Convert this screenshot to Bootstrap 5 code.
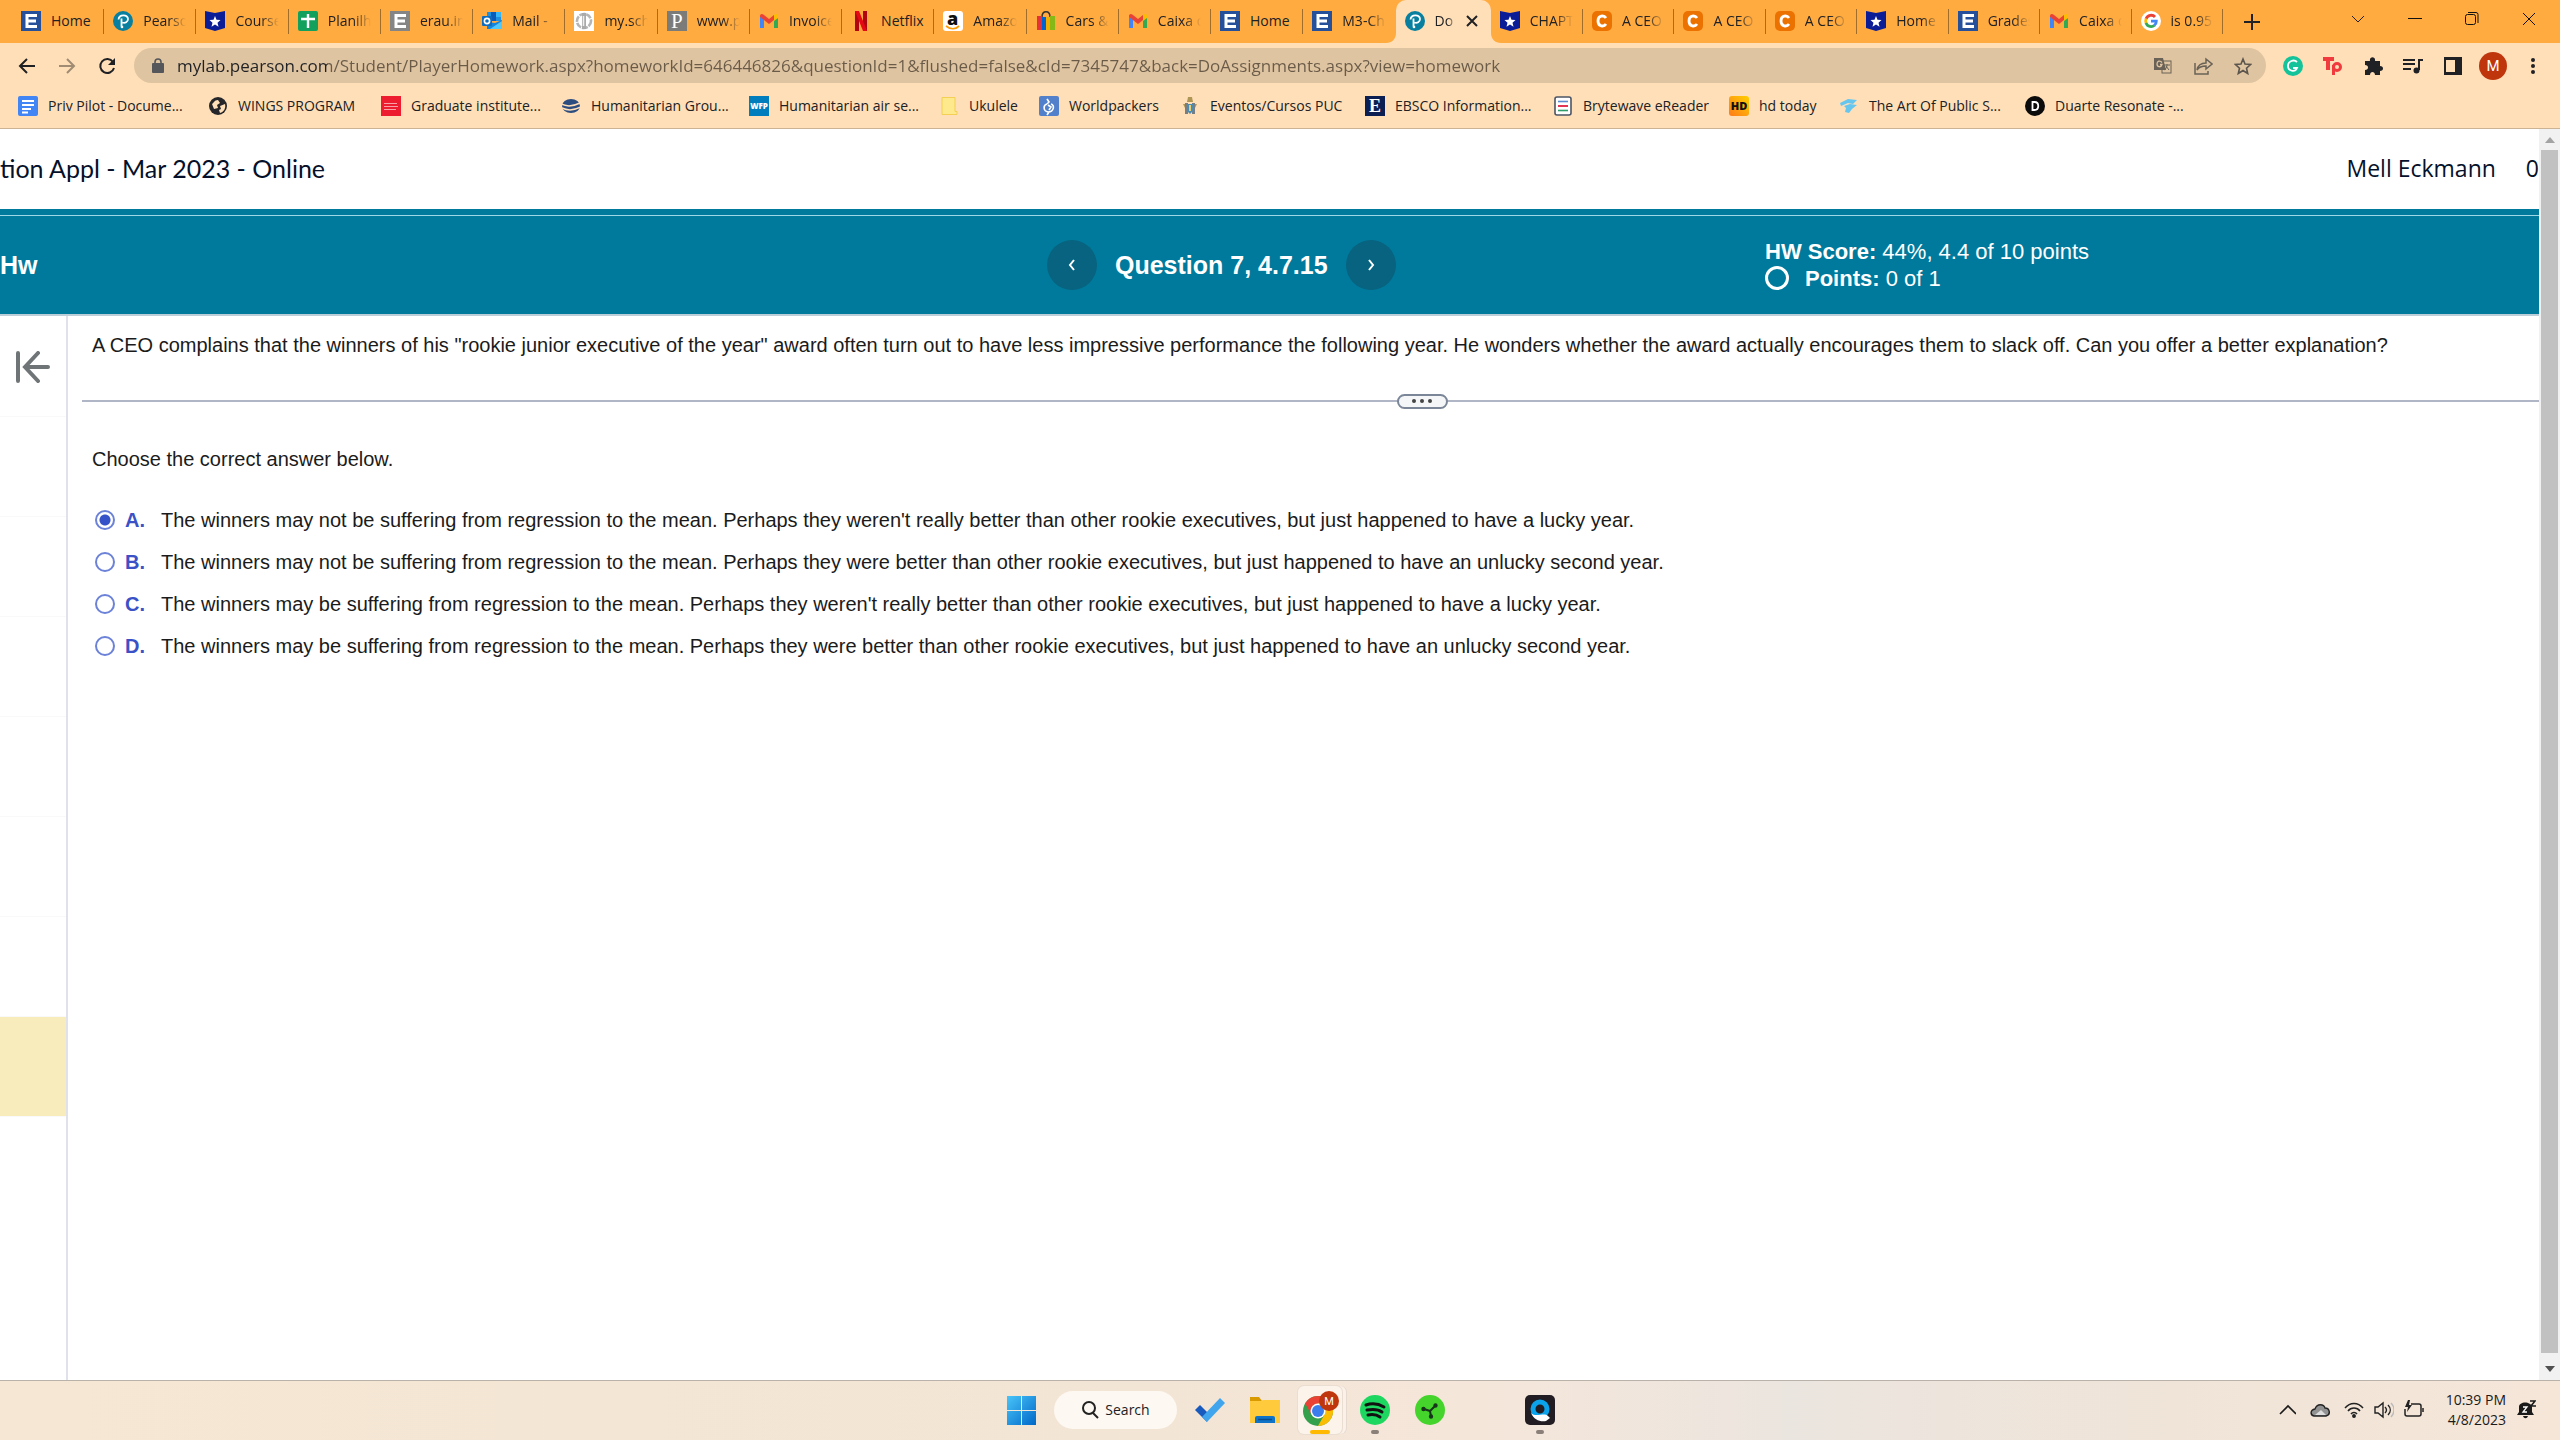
<!DOCTYPE html>
<html lang="en">
<head>
<meta charset="utf-8">
<meta name="viewport" content="width=device-width, initial-scale=1">
<title>Do Homework</title>
<link href="https://cdn.jsdelivr.net/npm/bootstrap@5.3.0/dist/css/bootstrap.min.css" rel="stylesheet">
<style>
  :root { --ui: "Open Sans", "Noto Sans", sans-serif; --doc: "Liberation Sans", Arial, sans-serif; --peach: #ffdfb8; --teal: #007a9c; }
  body { font-family: var(--ui); color: #202124; font-size: 14px; line-height: 20px; }
  svg { display: block; flex: none; }
  button { color: inherit; }
  .plain { border: 0; background: none; padding: 0; display: flex; align-items: center; justify-content: center; flex: none; }
  .ico { width: 20px; height: 20px; }

  .tabstrip { background: #ffab40; height: 43px; padding-left: 12px; }
  .tabs-a { flex: 0 0 1571px; min-width: 0; }
  .tabs-b { flex: 0 0 640px; min-width: 0; }
  .tab { flex: 1 1 0; min-width: 0; height: 43px; padding: 0 10px 1px 9px; gap: 10px; border: 0; background: none; text-align: left; position: relative; }
  .tab::after { content: ""; position: absolute; right: 0; top: 9px; height: 25px; width: 1px; background: #a06d2b; }
  .tab span { flex: 1; min-width: 0; overflow: hidden; white-space: nowrap; -webkit-mask-image: linear-gradient(90deg, #000 60%, transparent); mask-image: linear-gradient(90deg, #000 60%, transparent); }
  .tab.full span { -webkit-mask-image: none; mask-image: none; overflow: visible; }
  .tab.active { background: var(--peach); border-radius: 10px 10px 0 0; padding-right: 13px; }
  .tab.active::after, .tab.before::after { display: none; }
  .tab.active svg.foot { position: absolute; bottom: 0; }
  .tab.active .foot-l { left: -10px; }
  .tab.active .foot-r { right: -10px; }
  .winbtn { width: 57px; height: 37px; }
  .wincontrols { padding-right: 3px; }

  .toolbar { background: var(--peach); height: 45px; padding: 0 7px; }
  .tool { width: 40px; height: 40px; }
  .address { background: #dfc4a1; border-radius: 18px; height: 35px; margin: 0 7px; padding: 0 3px 0 18px; }
  .address input { flex: 1; min-width: 0; border: 0; outline: 0; padding: 0; margin-left: 13px; font-size: 17px; height: 30px; background: linear-gradient(90deg, #202124 0 151px, #6a5b49 151px); -webkit-background-clip: text; background-clip: text; -webkit-text-fill-color: transparent; }
  .bookmarks { background: var(--peach); height: 41px; padding: 0 18px 5px; border-bottom: 1px solid #ccb393; display: grid; align-items: center; grid-template-columns: 190px 173px 180px 188px 190px 100px 141px 185px 188px 176px 110px 186px 1fr; }
  .bookmarks a { color: #202124; text-decoration: none; display: flex; gap: 10px; align-items: center; white-space: nowrap; }

  .coursebar { height: 80px; padding-bottom: 2px; font-family: Lato, sans-serif; font-size: 25px; line-height: 28px; color: #05112a; white-space: nowrap; overflow: hidden; }
  .member { font-family: var(--ui); font-size: 23px; gap: 30px; }
  .band { background: var(--teal); color: #fff; font-family: var(--doc); border-top: 6px solid var(--teal); border-bottom: 2px solid #bccfd9; box-shadow: inset 0 1px #9ed8e6; height: 107px; display: grid; grid-template-columns: 1047px 718px 1fr; align-items: center; font-size: 22px; line-height: 27px; }
  .band h1, .band h2 { font-size: 25px; line-height: 30px; font-weight: 700; margin: 0; }
  .asknav { gap: 18px; }
  .round { width: 50px; height: 50px; border-radius: 50%; background: #07637f; }
  .ring { width: 24px; height: 24px; border: 3px solid #fff; border-radius: 50%; }

  .rail { flex: 0 0 68px; border-right: 2px solid #dfe2ea; padding-top: 1px; }
  .rail .cell { height: 100px; border-bottom: 1px solid #f9f9f9; flex: none; }
  .rail .now { background: #f8ebbc; }
  .quiz { font-family: var(--doc); font-size: 20px; line-height: 24px; color: #1b1b1b; padding-left: 14px; }
  .inset10 { padding-left: 10px; }
  .stem { margin: 0; padding-top: 17px; }
  .split { height: 2px; background: #b1b6c6; margin-top: 43px; padding-left: 223px; }
  .pill { width: 51px; height: 15px; border: 2px solid #7b8798; border-radius: 8px; background: #f4f6f8; gap: 4px; }
  .pill i { width: 4px; height: 4px; border-radius: 50%; background: #444; }
  .ask { margin: 0; padding: 45px 0 28px; font-size: 20px; line-height: 24px; }
  .answer { height: 42px; display: flex; align-items: center; }
  .answer input { appearance: none; width: 20px; height: 20px; border: 2px solid #6b82d8; border-radius: 50%; margin: 0 10px 0 3px; background: #fff; flex: none; }
  .answer input:checked { background: radial-gradient(circle, #3552c8 0 5px, #fff 6px); }
  .answer b { color: #3a52c6; width: 36px; }
  .vbar { flex: 0 0 21px; background: #f1f1f1; }
  .vbar .thumb { background: #c1c1c1; width: 17px; flex: 1; }

  .taskbar { height: 60px; padding-bottom: 1px; border-top: 1px solid #b9b2ab; background: linear-gradient(90deg, #f5e7d3, #f3e5d5 45%, #f5e6da 58%, #ebe5df 70%, #f0e4d8 85%, #f5e6d8); display: grid; grid-template-columns: 999px 1fr auto; align-items: center; }
  .apps { gap: 11px; }
  .task { width: 44px; height: 48px; position: relative; }
  .task.run::after { content: ""; position: absolute; bottom: 0; width: 8px; height: 4px; border-radius: 2px; background: #8a8079; }
  .task.on { background: #fcf3ea; border-radius: 6px; box-shadow: 0 0 0 1px #eaded2, 4px 0 0 #fbf1e8, 5px 0 0 #e6d9cd; }
  .task.on::after { width: 20px; background: #ffb900; }
  .task.launch { margin-left: 55px; }
  .find { width: 123px; height: 38px; border-radius: 19px; background: #fdf8f2; gap: 6px; }
  .tray { gap: 10px; padding-right: 24px; color: #1a1a1a; }
  .clock { text-align: right; line-height: 20px; margin-left: 12px; }
</style>
</head>
<body class="vh-100 d-flex flex-column overflow-hidden bg-white">
<svg width="0" height="0" class="position-absolute" aria-hidden="true">
  <defs>
    <symbol id="er" viewBox="0 0 20 20"><path fill="#27509b" d="M0 0h20v20H0z"/><path fill="none" stroke="#fff" stroke-width="3" d="M16 4.500H6v11h10M6 10h9"/></symbol>
    <symbol id="erg" viewBox="0 0 20 20"><path fill="#858585" d="M0 0h20v20H0z"/><path fill="none" stroke="#fff" stroke-width="3" d="M16 4.500H6v11h10M6 10h9"/></symbol>
    <symbol id="pe" viewBox="0 0 20 20"><circle cx="10" cy="10" r="10" fill="#087f9f"/><path fill="none" stroke="#fff" stroke-width="1.800" d="M8.500 15.500V7.500M5.500 8.500C6 3 15 3 15 8c0 3-3 4.500-5.500 3.500"/><circle cx="9" cy="16" r="1.300" fill="#fff"/></symbol>
    <symbol id="st" viewBox="0 0 20 20"><path fill="#0a1d96" d="M0 0l10 2L20 0v17l-10 3L0 17z"/><path fill="#fff" d="M10 5l1.500 3.800 4 .3-3 2.600 1 4-3.500-2.200-3.500 2.200 1-4-3-2.600 4-.3z"/></symbol>
    <symbol id="pl" viewBox="0 0 20 20"><rect width="20" height="20" rx="2" fill="#12a05c"/><path stroke="#fff" stroke-width="2.400" d="M10 3v14M3 8h14"/></symbol>
    <symbol id="ol" viewBox="0 0 20 20"><path fill="#1f8fe0" d="M5 1h14v9H5z"/><path fill="#0a5cb8" d="M9 1h5v9H9z"/><path fill="#35b8f5" d="M14 1h5v5h-5z"/><path fill="#1284dc" d="M5 11l8 1 7-3v9H5z"/><path fill="#50c8fa" d="M8 18l12-8v8z"/><rect y="5" width="10" height="10" rx="1" fill="#0f6cbd"/><circle cx="5" cy="10" r="2.600" fill="none" stroke="#fff" stroke-width="1.600"/></symbol>
    <symbol id="sc" viewBox="0 0 20 20"><path fill="#fff" d="M0 0h20v20H0z"/><circle cx="10" cy="10" r="7" fill="none" stroke="#b5b5b5" stroke-width="2.600" stroke-dasharray="6 1"/><path fill="#aaa" d="M8 2h4v16H8z"/><path stroke="#eee" stroke-width="1.500" d="M9.500 5v10"/></symbol>
    <symbol id="pp" viewBox="0 0 20 20"><path fill="#7b7b79" d="M0 0h20v20H0z"/><text x="4" y="17" font-family="Liberation Serif" font-size="21" fill="#fff">P</text></symbol>
    <symbol id="gm" viewBox="0 0 20 20"><path fill="#4285f4" d="M1 5l4 3v9H1z"/><path fill="#34a853" d="M15 8l4-3v12h-4z"/><path fill="#ea4335" d="M1 5c0-2 2-3 4-1l5 4 5-4v5l-5 4-9-7z"/><path fill="#fbbc04" d="M15 4c2-2 4-1 4 1v2l-4 3z"/></symbol>
    <symbol id="nf" viewBox="0 0 20 20"><path fill="#b1060f" d="M4 0h4v20H4zM12 0h4v20h-4z"/><path fill="#e50914" d="M4 0h4l8 20h-4z"/></symbol>
    <symbol id="am" viewBox="0 0 20 20"><rect width="20" height="20" rx="3" fill="#fff"/><text x="4" y="14" font-family="Open Sans" font-weight="800" font-size="18" fill="#111">a</text><path fill="none" stroke="#ff9900" stroke-width="1.800" d="M3 15c5 4 10 3 13 0"/></symbol>
    <symbol id="ca" viewBox="0 0 20 20"><path fill="none" stroke="#333" stroke-width="1.400" d="M6 6c0-7 8-7 8 0"/><path fill="#e53238" d="M1 5h5v14H1z"/><path fill="#0064d2" d="M6 6h4v13H6z"/><path fill="#f5af02" d="M10 6h4v13h-4z"/><path fill="#86b817" d="M14 5h5v14h-5z"/></symbol>
    <symbol id="cc" viewBox="0 0 20 20"><rect width="20" height="20" rx="5" fill="#eb7100"/><path fill="none" stroke="#fff" stroke-width="2.800" d="M14 7c-2-3-8-3-8 3s6 6 8 3"/></symbol>
    <symbol id="gg" viewBox="0 0 20 20"><circle cx="10" cy="10" r="10" fill="#fff"/><g fill="none" stroke-width="2.800"><path stroke="#ea4335" d="M5 8c1.500-4 6.500-5 9-2"/><path stroke="#fbbc04" d="M5.200 12.500c-.8-1.600-.8-3.300 0-5"/><path stroke="#34a853" d="M5 12c1.500 4 6 4.500 8.500 2.200"/><path stroke="#4285f4" d="M10 10.200h5.300c0 2-.7 3.300-2 4.200"/></g></symbol>
    <symbol id="dc" viewBox="0 0 20 20"><rect width="20" height="20" rx="2" fill="#4285f4"/><path stroke="#fff" stroke-width="2" d="M4 5h12M4 9h12M4 13h9M4 16.500h6"/></symbol>
    <symbol id="gl" viewBox="0 0 20 20"><circle cx="10" cy="10" r="9" fill="#25262a"/><path fill="#ffdfb8" d="M4 8c2-1 2-4 6-4l2 3-3 2 1 3-4 1zM12 10l5-2c1 4-1 8-5 9l-1-3 2-1z"/></symbol>
    <symbol id="gr" viewBox="0 0 20 20"><path fill="#ed1c2e" d="M0 0h20v20H0z"/><path stroke="#f8a0a5" d="M3 7.500h13M3 10.500h14M3 13.500h12"/></symbol>
    <symbol id="hu" viewBox="0 0 20 20"><ellipse cx="10" cy="10" rx="9" ry="7" fill="#2c4d80"/><path fill="none" stroke="#ffdfb8" stroke-width="1.500" d="M0 8c6 3 13 2 19-1M1 12c6 3 13 2 19-1"/></symbol>
    <symbol id="wf" viewBox="0 0 20 20"><path fill="#007dbc" d="M0 0h20v20H0z"/><text x="10" y="13" text-anchor="middle" font-family="Open Sans" font-weight="800" font-size="8" fill="#fff">WFP</text></symbol>
    <symbol id="uk" viewBox="0 0 20 20"><path fill="#ffe98d" stroke="#f3cf55" d="M3 1.500h13v14h2v3H3z"/></symbol>
    <symbol id="wo" viewBox="0 0 20 20"><rect width="20" height="20" rx="2" fill="#5380cb"/><path fill="none" stroke="#fff" stroke-width="1.600" d="M8 3l2 3-2 2M8 8c-4 1-4 7 1 8 6 0 7-7 3-8M10 16l-2 3M9 9l3 2-2 3"/></symbol>
    <symbol id="ev" viewBox="0 0 20 20"><path fill="#b09654" d="M8 1h4l1 5H7zM3 8h14l-2 4H5z"/><path fill="#777d83" d="M5 7h3v11H5zM12 7h3v11h-3z"/><path fill="#4b8cb3" d="M7 8h6v7l-3 3-3-3z"/><path fill="#e8cc76" d="M9 9h2v6H9z"/></symbol>
    <symbol id="eb" viewBox="0 0 20 20"><path fill="#0c1f52" d="M0 0h20v20H0z"/><text x="4" y="16" font-family="Liberation Serif" font-weight="700" font-size="18" fill="#fff">E</text></symbol>
    <symbol id="br" viewBox="0 0 20 20"><rect x="2" y="1" width="16" height="18" rx="2" fill="#fff" stroke="#4c5566" stroke-width="1.600"/><path stroke="#5a8ed0" stroke-width="1.600" d="M5 5.500h10"/><path stroke="#e23654" stroke-width="2" d="M5 10h10"/><path stroke="#2f9c6b" stroke-width="1.600" d="M5 14.500h10"/></symbol>
    <symbol id="hd" viewBox="0 0 20 20"><linearGradient id="hdg" x1="0" y1="1" x2="1" y2="0"><stop stop-color="#ff7a1a"/><stop offset="1" stop-color="#ffd000"/></linearGradient><rect width="20" height="20" rx="3" fill="url(#hdg)"/><text x="10" y="14" text-anchor="middle" font-family="Open Sans" font-weight="800" font-size="11" fill="#111">HD</text></symbol>
    <symbol id="ar" viewBox="0 0 20 20"><path fill="#67c6ee" d="M1 7l8-4 9 1-4 4-5-1-7 3zM5 10l6-2 7 1-5 4-3 4-4-1 1-4z"/></symbol>
    <symbol id="du" viewBox="0 0 20 20"><circle cx="10" cy="10" r="10" fill="#0b0b0b"/><path fill="none" stroke="#fff" stroke-width="1.800" d="M7.500 6v8h2c5 0 5-8 0-8z"/></symbol>
  </defs>
</svg>

<header>
  <nav class="tabstrip d-flex" aria-label="Tabs">
    <div class="tabs-a d-flex">
      <button class="tab full d-flex align-items-center"><svg class="ico"><use href="#er"/></svg><span>Home</span></button>
      <button class="tab d-flex align-items-center"><svg class="ico"><use href="#pe"/></svg><span>Pearso</span></button>
      <button class="tab d-flex align-items-center"><svg class="ico"><use href="#st"/></svg><span>Course</span></button>
      <button class="tab d-flex align-items-center"><svg class="ico"><use href="#pl"/></svg><span>Planilh</span></button>
      <button class="tab d-flex align-items-center"><svg class="ico"><use href="#erg"/></svg><span>erau.in</span></button>
      <button class="tab d-flex align-items-center"><svg class="ico"><use href="#ol"/></svg><span>Mail -</span></button>
      <button class="tab d-flex align-items-center"><svg class="ico"><use href="#sc"/></svg><span>my.sch</span></button>
      <button class="tab d-flex align-items-center"><svg class="ico"><use href="#pp"/></svg><span>www.p</span></button>
      <button class="tab d-flex align-items-center"><svg class="ico"><use href="#gm"/></svg><span>Invoice</span></button>
      <button class="tab full d-flex align-items-center"><svg class="ico"><use href="#nf"/></svg><span>Netflix</span></button>
      <button class="tab d-flex align-items-center"><svg class="ico"><use href="#am"/></svg><span>Amazo</span></button>
      <button class="tab d-flex align-items-center"><svg class="ico"><use href="#ca"/></svg><span>Cars &amp;</span></button>
      <button class="tab d-flex align-items-center"><svg class="ico"><use href="#gm"/></svg><span>Caixa d</span></button>
      <button class="tab full d-flex align-items-center"><svg class="ico"><use href="#er"/></svg><span>Home</span></button>
      <button class="tab before d-flex align-items-center"><svg class="ico"><use href="#er"/></svg><span>M3-Ch</span></button>
      <button class="tab active d-flex align-items-center"><svg class="foot foot-l" width="10" height="10"><path fill="#ffdfb8" d="M10 0v10H0c6 0 10-4 10-10z"/></svg><svg class="ico"><use href="#pe"/></svg><span>Do</span><svg width="12" height="12" viewBox="0 0 12 12"><path stroke="#202124" stroke-width="2" d="M1 1l10 10M11 1L1 11"/></svg><svg class="foot foot-r" width="10" height="10"><path fill="#ffdfb8" d="M0 0v10h10C4 10 0 6 0 0z"/></svg></button>
      <button class="tab d-flex align-items-center"><svg class="ico"><use href="#st"/></svg><span>CHAPT</span></button>
    </div>
    <div class="tabs-b d-flex">
      <button class="tab d-flex align-items-center"><svg class="ico"><use href="#cc"/></svg><span>A CEO</span></button>
      <button class="tab d-flex align-items-center"><svg class="ico"><use href="#cc"/></svg><span>A CEO</span></button>
      <button class="tab d-flex align-items-center"><svg class="ico"><use href="#cc"/></svg><span>A CEO</span></button>
      <button class="tab d-flex align-items-center"><svg class="ico"><use href="#st"/></svg><span>Home</span></button>
      <button class="tab d-flex align-items-center"><svg class="ico"><use href="#er"/></svg><span>Grades</span></button>
      <button class="tab d-flex align-items-center"><svg class="ico"><use href="#gm"/></svg><span>Caixa d</span></button>
      <button class="tab d-flex align-items-center"><svg class="ico"><use href="#gg"/></svg><span>is 0.95</span></button>
    </div>
    <button class="plain winbtn h-100" aria-label="New tab"><svg width="16" height="16"><path stroke="#202124" stroke-width="2" d="M8 0v16M0 8h16"/></svg></button>
    <div class="wincontrols ms-auto d-flex">
      <button class="plain winbtn" aria-label="Search tabs"><svg width="14" height="8" fill="none" stroke="#222"><path d="M1 1l6 6 6-6"/></svg></button>
      <button class="plain winbtn" aria-label="Minimize"><svg width="14" height="2"><path fill="#111" d="M0 0h14v1H0z"/></svg></button>
      <button class="plain winbtn" aria-label="Restore"><svg width="14" height="14" fill="none" stroke="#111"><rect x=".500" y="2.500" width="10" height="10" rx="2"/><path d="M3 .500h8a2 2 0 0 1 2 2V11"/></svg></button>
      <button class="plain winbtn" aria-label="Close"><svg width="14" height="14" stroke="#111"><path d="M1 1l12 12M13 1L1 13"/></svg></button>
    </div>
  </nav>

  <div class="toolbar d-flex align-items-center">
    <button class="plain tool" aria-label="Back"><svg width="18" height="16" fill="none" stroke="#202124" stroke-width="2"><path d="M17 8H2M9 1L2 8l7 7"/></svg></button>
    <button class="plain tool" aria-label="Forward"><svg width="18" height="16" fill="none" stroke="#a08c73" stroke-width="2"><path d="M1 8h15M9 1l7 7-7 7"/></svg></button>
    <button class="plain tool" aria-label="Reload"><svg width="18" height="18" fill="none" stroke="#202124" stroke-width="2"><path d="M15 5a7 7 0 1 0 1 6"/><path fill="#202124" stroke="none" d="M17 1v7h-7z"/></svg></button>
    <div class="address d-flex align-items-center flex-grow-1">
      <svg width="12" height="16"><rect y="5" width="12" height="10" rx="1" fill="#55565a"/><path fill="none" stroke="#55565a" stroke-width="1.600" d="M3 6V4c0-4 6-4 6 0v2"/></svg>
      <input type="text" aria-label="Address" value="mylab.pearson.com/Student/PlayerHomework.aspx?homeworkId=646446826&amp;questionId=1&amp;flushed=false&amp;cId=7345747&amp;back=DoAssignments.aspx?view=homework">
      <button class="plain tool" aria-label="Translate"><svg width="18" height="18"><rect x="8" y="4" width="9" height="12" fill="none" stroke="#6a6256"/><path fill="#6a6256" d="M0 1h9l3 12H0z"/><path fill="none" stroke="#dfc4a1" stroke-width="1.300" d="M8 5.500C6 3 3 4 3 7s4 4 5 .500H6"/><path stroke="#6a6256" fill="none" d="M10 8h6M13 7v1c0 2-1 4-3 5M12 9l3 4"/></svg></button>
      <button class="plain tool" aria-label="Share"><svg width="20" height="18" fill="none" stroke="#6a6256" stroke-width="1.500"><path d="M2 6v11h13v-3M4 13c1-5 4-7 9-7V2l6 5-6 5V9c-4 0-7 1-9 4z"/></svg></button>
      <button class="plain tool" aria-label="Bookmark"><svg width="18" height="18" fill="none" stroke="#5b554d" stroke-width="1.600"><path d="M9 2l2 5 5.500.500-4 3.700 1.200 5.300L9 13.500l-4.700 3 1.200-5.300-4-3.700L7 7z"/></svg></button>
    </div>
    <button class="plain tool" aria-label="Grammar"><svg class="ico" viewBox="0 0 20 20"><circle cx="10" cy="10" r="10" fill="#15c39a"/><path fill="none" stroke="#fff" stroke-width="1.800" d="M14 6c-3-3-9-1-9 4s7 7 9 2h-4"/></svg></button>
    <button class="plain tool" aria-label="Teleparty"><svg width="20" height="20" fill="none" stroke="#f03a3e" stroke-width="4"><path d="M0 3h11M5 3v11"/><circle cx="14" cy="11" r="3.500" stroke-width="3"/><path stroke-width="3" d="M10.500 9v10"/></svg></button>
    <button class="plain tool" aria-label="Extensions"><svg width="20" height="20" fill="#202124"><path d="M2 5h5c-1-5 6-5 5 0h5v5c4 0 4 5 0 5v4h-5c0-4-5-4-5 0H2v-5c4 0 4-5 0-5z"/></svg></button>
    <button class="plain tool" aria-label="Media"><svg width="20" height="18" fill="none" stroke="#202124" stroke-width="2"><path d="M0 3h12M0 7h12M0 12h8M16 13V3h4"/><circle cx="13.500" cy="13.500" r="2" fill="#202124"/></svg></button>
    <button class="plain tool" aria-label="Side panel"><svg width="18" height="18"><path fill="#202124" d="M0 0h18v18H0z"/><path fill="#ffdfb8" d="M2 3h9v12H2z"/></svg></button>
    <button class="plain tool" aria-label="Profile"><svg width="28" height="28"><circle cx="14" cy="14" r="14" fill="#bf360c"/><text x="14" y="19" text-anchor="middle" font-size="15" fill="#fff" font-family="Roboto">M</text></svg></button>
    <button class="plain tool" aria-label="Menu"><svg width="4" height="16" fill="#202124"><circle cx="2" cy="2" r="2"/><circle cx="2" cy="8" r="2"/><circle cx="2" cy="14" r="2"/></svg></button>
  </div>

  <nav class="bookmarks" aria-label="Bookmarks">
    <a href="#"><svg class="ico"><use href="#dc"/></svg>Priv Pilot - Docume...</a>
    <a href="#"><svg class="ico"><use href="#gl"/></svg>WINGS PROGRAM</a>
    <a href="#"><svg class="ico"><use href="#gr"/></svg>Graduate institute...</a>
    <a href="#"><svg class="ico"><use href="#hu"/></svg>Humanitarian Grou...</a>
    <a href="#"><svg class="ico"><use href="#wf"/></svg>Humanitarian air se...</a>
    <a href="#"><svg class="ico"><use href="#uk"/></svg>Ukulele</a>
    <a href="#"><svg class="ico"><use href="#wo"/></svg>Worldpackers</a>
    <a href="#"><svg class="ico"><use href="#ev"/></svg>Eventos/Cursos PUC</a>
    <a href="#"><svg class="ico"><use href="#eb"/></svg>EBSCO Information...</a>
    <a href="#"><svg class="ico"><use href="#br"/></svg>Brytewave eReader</a>
    <a href="#"><svg class="ico"><use href="#hd"/></svg>hd today</a>
    <a href="#"><svg class="ico"><use href="#ar"/></svg>The Art Of Public S...</a>
    <a href="#"><svg class="ico"><use href="#du"/></svg>Duarte Resonate -...</a>
  </nav>
</header>

<div class="d-flex flex-grow-1 overflow-hidden">
  <div class="d-flex flex-column flex-grow-1">
    <div class="coursebar d-flex justify-content-between align-items-center">
      <div>tion Appl - Mar 2023 - Online</div>
      <div class="member d-flex"><span>Mell Eckmann</span><span>0</span></div>
    </div>
    <div class="band">
      <h2>Hw</h2>
      <div class="asknav d-flex align-items-center">
        <button class="plain round" aria-label="Previous question"><svg width="8" height="12" fill="none" stroke="#fff" stroke-width="2"><path d="M6 1L2 6l4 5"/></svg></button>
        <h1>Question 7, 4.7.15</h1>
        <button class="plain round" aria-label="Next question"><svg width="8" height="12" fill="none" stroke="#fff" stroke-width="2"><path d="M2 1l4 5-4 5"/></svg></button>
      </div>
      <div>
        <div><b>HW Score:</b> 44%, 4.4 of 10 points</div>
        <div class="d-flex align-items-center gap-3"><span class="ring"></span><span><b>Points:</b> 0 of 1</span></div>
      </div>
    </div>
    <div class="d-flex flex-grow-1">
      <aside class="rail d-flex flex-column">
        <div class="cell d-flex align-items-center ps-3"><button class="plain" aria-label="Collapse list"><svg width="36" height="32" viewBox="2 0 36 32" fill="none" stroke="#6f7577" stroke-width="4" stroke-linecap="round"><path d="M4 2v28M34 16H12M24 2L11 16l13 14"/></svg></button></div>
        <div class="cell"></div><div class="cell"></div><div class="cell"></div><div class="cell"></div><div class="cell"></div><div class="cell"></div>
        <div class="cell now"></div>
      </aside>
      <main class="quiz flex-grow-1">
        <p class="stem inset10">A CEO complains that the winners of his "rookie junior executive of the year" award often turn out to have less impressive performance the following year. He wonders whether the award actually encourages them to slack off. Can you offer a better explanation?</p>
        <div class="split d-flex align-items-center justify-content-center"><button class="plain pill" aria-label="Resize panes"><i></i><i></i><i></i></button></div>
        <fieldset class="inset10">
          <legend class="ask">Choose the correct answer below.</legend>
          <label class="answer"><input type="radio" name="q" checked><b>A.</b><span>The winners may not be suffering from regression to the mean. Perhaps they weren't really better than other rookie executives, but just happened to have a lucky year.</span></label>
          <label class="answer"><input type="radio" name="q"><b>B.</b><span>The winners may not be suffering from regression to the mean. Perhaps they were better than other rookie executives, but just happened to have an unlucky second year.</span></label>
          <label class="answer"><input type="radio" name="q"><b>C.</b><span>The winners may be suffering from regression to the mean. Perhaps they weren't really better than other rookie executives, but just happened to have a lucky year.</span></label>
          <label class="answer"><input type="radio" name="q"><b>D.</b><span>The winners may be suffering from regression to the mean. Perhaps they were better than other rookie executives, but just happened to have an unlucky second year.</span></label>
        </fieldset>
      </main>
    </div>
  </div>
  <div class="vbar d-flex flex-column align-items-center">
    <svg width="21" height="21"><path fill="#a3a3a3" d="M6 14l5-6 5 6z"/></svg>
    <div class="thumb"></div>
    <svg width="21" height="27"><path fill="#505050" d="M6 13l5 6 5-6z"/></svg>
  </div>
</div>

<footer class="taskbar">
  <span></span>
  <div class="apps d-flex align-items-center">
    <button class="plain task" aria-label="Start"><svg width="30" height="30"><defs><linearGradient id="wg" gradientUnits="userSpaceOnUse" x1="0" y1="0" x2="30" y2="30"><stop stop-color="#4cc8fb"/><stop offset="1" stop-color="#0067c8"/></linearGradient></defs><path fill="url(#wg)" d="M1 1h14v14H1zM16 1h14v14H16zM1 16h14v14H1zM16 16h14v14H16z"/></svg></button>
    <button class="plain find"><svg width="18" height="18" fill="none" stroke="#222" stroke-width="2"><circle cx="8" cy="7" r="6"/><path d="M12 12l5 5"/></svg>Search</button>
    <button class="plain task" aria-label="To Do"><svg width="30" height="26"><path fill="#185abd" d="M0 13l5-5 8 8-1 9z"/><path fill="#41a5ee" d="M12 25l-5-5L25 1l5 5z"/></svg></button>
    <button class="plain task" aria-label="File Explorer"><svg width="30" height="28"><path fill="#d99a00" d="M0 1h9l3 4H0z"/><path fill="#ffcb3d" d="M0 5l11 0 2-1h17v23H0z"/><path fill="#0f74c8" d="M5 27v-5q0-2 2-2h16q2 0 2 2v5z"/><path stroke="#0a4c8c" stroke-width="1.500" d="M8 23.500h14"/></svg></button>
    <button class="plain task run on" aria-label="Chrome"><svg width="40" height="38" viewBox="0 0 40 38"><circle cx="18" cy="20" r="15" fill="#34a04c"/><path fill="#ea4335" d="M5 12.500a15 15 0 0 1 26 0H18l-6.500 11z"/><path fill="#fbbc04" d="M18 35a15 15 0 0 0 13-22.500H18l6.500 11z"/><circle cx="18" cy="20" r="7.500" fill="#fff"/><circle cx="18" cy="20" r="6" fill="#3b7ded"/><circle cx="29" cy="10" r="10" fill="#bf360c"/><text x="29" y="14" text-anchor="middle" font-size="11" fill="#fff" font-family="Roboto">M</text></svg></button>
    <button class="plain task run" aria-label="Spotify"><svg width="30" height="30" fill="none" stroke="#111" stroke-width="3" stroke-linecap="round"><circle cx="15" cy="15" r="15" fill="#1ed760" stroke="none"/><path d="M6 10c6-2 13-1 18 2M7 15c6-1 11-1 15 2M8 20c5-1 8-1 12 2"/></svg></button>
    <button class="plain task" aria-label="Green app"><svg width="30" height="30" fill="#17351a" stroke="#17351a" stroke-width="2"><circle cx="15" cy="15" r="15" fill="#45d42c" stroke="none"/><path fill="none" d="M9 14l6 2 5-5M15 16l1 5"/><circle cx="8.500" cy="14" r="1.200"/><circle cx="20.500" cy="10.500" r="1.200"/><circle cx="16" cy="21.500" r="1.200"/></svg></button>
    <button class="plain task run launch" aria-label="Q app"><svg width="30" height="30"><rect width="30" height="30" rx="5" fill="#211d22"/><circle cx="15" cy="14" r="7" fill="none" stroke="#0ba4ec" stroke-width="5"/><path fill="#fff" d="M6 18c5 5 13-1 17 3l2 2-4 3c-6 1-12-1-15-8z"/></svg></button>
  </div>
  <div class="tray d-flex align-items-center">
    <svg class="ico" viewBox="0 0 20 20" fill="none" stroke="#1a1a1a" stroke-width="1.600"><path d="M4 14l8-8 8 8"/></svg>
    <svg class="ico mx-1" viewBox="0 0 20 20"><path fill="#929292" stroke="#222" stroke-width="1.400" d="M4 16c-4-1-4-6 1-7 2-6 9-5 10-1 5 0 6 7 1 8z"/><path fill="#ddd" d="M5 15l6-5 5 5z"/></svg>
    <svg class="ico" viewBox="0 0 20 20" fill="none" stroke="#222" stroke-width="1.500"><path d="M1 8c5-6 13-6 18 0M4 11c3-4 9-4 12 0M7 14c1.500-2 4.500-2 6 0"/><circle cx="10" cy="16" r="1.200" fill="#222"/></svg>
    <svg class="ico" viewBox="0 0 20 20" fill="none" stroke="#222" stroke-width="1.400"><path d="M1 7h3l5-4v14l-5-4H1zM11 7c2 2 2 4 0 6M14 5c3 3 3 7 0 10"/><path stroke="#bbb" d="M17 3c4 4 4 10 0 14"/></svg>
    <svg class="ico" viewBox="0 0 20 20" fill="none" stroke="#222" stroke-width="1.500"><path d="M7 4h8q2 0 2 2v8q0 2-2 2H3q-2 0-2-2V9M19 8v4"/><path fill="#222" stroke="none" d="M4 0L1 7h3l-1 5 5-7H5l1-5z"/></svg>
    <div class="clock">10:39 PM<br>4/8/2023</div>
    <svg class="ico" viewBox="0 0 20 20"><path fill="#1a1a1a" d="M1 15l2-3V7c0-6 12-6 13 0v5l2 3zM7 16h5c-1 3-4 3-5 0z"/><path fill="none" stroke="#fff" stroke-width="1.300" d="M7 7h4l-4 5h4"/><path fill="none" stroke="#1a1a1a" stroke-width="1.600" d="M14 1h5l-4 5h5"/></svg>
  </div>
</footer>
<script src="https://cdn.jsdelivr.net/npm/bootstrap@5.3.0/dist/js/bootstrap.bundle.min.js"></script>
</body>
</html>
